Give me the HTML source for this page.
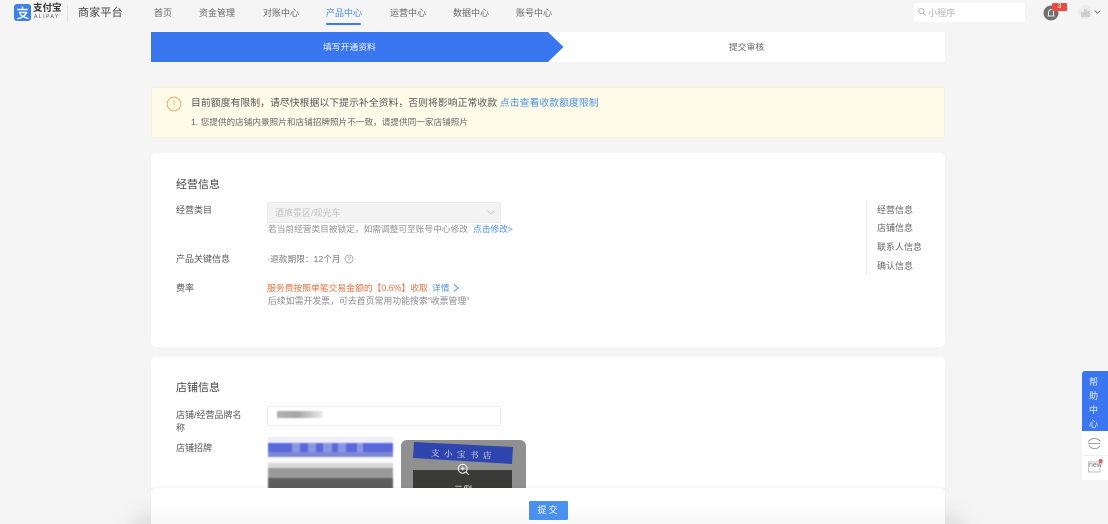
<!DOCTYPE html>
<html lang="zh-CN"><head><meta charset="utf-8"><title>商家平台</title>
<style>
html,body{margin:0;padding:0;width:1108px;height:524px;overflow:hidden;background:#f5f5f5}
body{position:relative;font-family:"Liberation Sans","Noto Sans CJK SC",sans-serif;font-size:9px;color:#555}
#w{position:absolute;left:0;top:0;width:1108px;height:524px;background:#f5f5f5;filter:blur(.35px);overflow:hidden}
.a{position:absolute;white-space:nowrap;line-height:12px}
.nav{top:7px;font-size:9px;color:#666}
.card{position:absolute;left:151px;width:794px;background:#fff;border-radius:5px}
.lab{left:176px;font-size:9px;color:#555}
.link{color:#4a8fe0}
.side{left:877px;font-size:9px;color:#666}
</style></head><body><div id="w">
<svg class="a" style="left:14px;top:4px" width="17" height="17" viewBox="0 0 17 17"><rect width="17" height="17" rx="3" fill="#3b82e8"/><path d="M3 5.500H14M8.500 2.500V5.500M5 8.500H12.500C11.500 11.500 8 14 3.200 14.800M5.500 9.500C7.500 12 10.500 13.700 14.500 14.500" stroke="#fff" stroke-width="1.400" fill="none"/></svg>
<div class="a" style="left:33px;top:3px;font-size:9.500px;font-weight:bold;color:#333">支付宝</div>
<div class="a" style="left:34px;top:14px;font-size:5px;line-height:6px;color:#555;letter-spacing:1.500px">ALIPAY</div>
<div class="a" style="left:67px;top:5px;width:1px;height:17px;background:#e2e2e2"></div>
<div class="a" style="left:78px;top:7px;font-size:11px;color:#444;letter-spacing:.2px">商家平台</div>
<div class="a nav" style="left:154px">首页</div>
<div class="a nav" style="left:199px">资金管理</div>
<div class="a nav" style="left:263px">对账中心</div>
<div class="a nav" style="left:326px;color:#4a8af0">产品中心</div>
<div class="a" style="left:326px;top:23px;width:35px;height:2px;background:#3c78ee;border-radius:1px"></div>
<div class="a nav" style="left:390px">运营中心</div>
<div class="a nav" style="left:453px">数据中心</div>
<div class="a nav" style="left:516px">账号中心</div>
<div class="a" style="left:914px;top:3px;width:111px;height:19px;background:#fff;border-radius:1px"></div>
<svg class="a" style="left:918px;top:8px" width="8" height="8" viewBox="0 0 8 8"><circle cx="3.300" cy="3.300" r="2.600" fill="none" stroke="#aaa" stroke-width=".8"/><path d="M5.200 5.200L7.500 7.500" stroke="#aaa" stroke-width=".8"/></svg>
<div class="a" style="left:928px;top:7px;color:#b5b5b5">小程序</div>
<svg class="a" style="left:1043px;top:5px" width="16" height="16" viewBox="0 0 16 16"><circle cx="8" cy="8" r="7.500" fill="#707070"/><path d="M4.500 11H11.500M5.500 11V7.500C5.500 5.800 6.500 4.600 8 4.600S10.500 5.800 10.500 7.500V11" stroke="#eee" stroke-width="1" fill="none"/></svg>
<div class="a" style="left:1052px;top:3px;width:15px;height:8px;background:#ea4a40;border-radius:1px;color:#fff;font-size:7px;line-height:8px;text-align:center">3</div>
<div class="a" style="left:1078px;top:5px;width:14px;height:14px;border-radius:50%;background:#ececec"></div>
<svg class="a" style="left:1081px;top:8px" width="9" height="9" viewBox="0 0 9 9"><path d="M0 9V4H3V9ZM3 9V1H6V9ZM6 9V3H9V9Z" fill="#cfcfcf"/></svg>
<svg class="a" style="left:1094px;top:10px" width="7" height="4" viewBox="0 0 7 4"><path d="M.5.500L3.500 3.200L6.500.5" fill="none" stroke="#666" stroke-width=".8"/></svg>

<div class="a" style="left:151px;top:32px;width:794px;height:30px;background:#fff"></div>
<svg class="a" style="left:151px;top:32px" width="413" height="30" viewBox="0 0 413 30"><path d="M0 0H397L412.500 15L397 30H0Z" fill="#3a76f0"/></svg>
<div class="a" style="left:323px;top:41px;font-size:8.800px;color:#f2f6ff">填写开通资料</div>
<div class="a" style="left:729px;top:41px;font-size:8.800px;color:#666">提交审核</div>

<div class="a" style="left:151px;top:87px;width:792px;height:49px;background:#fffbe9;border:1px solid #f7f1db;border-radius:2px"></div>
<svg class="a" style="left:166px;top:96px" width="16" height="16" viewBox="0 0 16 16"><circle cx="8" cy="8" r="6.800" fill="none" stroke="#eeb366" stroke-width="1.100"/><path d="M8 4.300V9M8 10.500V11.800" stroke="#eeb366" stroke-width="1.100"/></svg>
<div class="a" style="left:191px;top:98px;font-size:9.900px;color:#555">目前额度有限制，请尽快根据以下提示补全资料，否则将影响正常收款 <span class="link">点击查看收款额度限制</span></div>
<div class="a" style="left:191px;top:116px;font-size:8.650px;color:#666">1. 您提供的店铺内景照片和店铺招牌照片不一致，请提供同一家店铺照片</div>

<div class="card" style="top:153px;height:194px"></div>
<div class="a" style="left:176px;top:179px;font-size:11px;color:#444">经营信息</div>
<div class="a lab" style="top:204px">经营类目</div>
<div class="a" style="left:267px;top:202px;width:232px;height:19px;background:#f3f3f3;border:1px solid #ebebeb;border-radius:2px"></div>
<div class="a" style="left:275px;top:207px;color:#c0c0c0">酒旅景区/观光车</div>
<svg class="a" style="left:487px;top:210px" width="8" height="5" viewBox="0 0 8 5"><path d="M.5.500L4 4L7.500.5" fill="none" stroke="#c5c5c5" stroke-width=".8"/></svg>
<div class="a" style="left:268px;top:223px;font-size:8.700px;color:#909090">若当前经营类目被锁定，如需调整可至账号中心修改</div>
<div class="a link" style="left:473px;top:223px;font-size:8.700px">点击修改&gt;</div>
<div class="a lab" style="top:253px">产品关键信息</div>
<div class="a" style="left:267px;top:253px;font-size:8.700px;color:#777"><span style="color:#bbb">◦</span>退款期限：12个月</div>
<svg class="a" style="left:344px;top:254px" width="10" height="10" viewBox="0 0 10 10"><circle cx="5" cy="5" r="4" fill="none" stroke="#999" stroke-width=".7"/><path d="M3.800 4C3.800 2.500 6.200 2.500 6.200 4C6.200 5 5 5 5 6M5 6.800V7.500" fill="none" stroke="#999" stroke-width=".7"/></svg>
<div class="a lab" style="top:282px">费率</div>
<div class="a" style="left:267px;top:282px;font-size:8.800px;color:#e8743f">服务费按照单笔交易金额的【0.6%】收取</div>
<div class="a link" style="left:432px;top:282px;font-size:8.700px">详情</div>
<svg class="a" style="left:453px;top:284px" width="6" height="8" viewBox="0 0 6 8"><path d="M1 .5L5 4L1 7.500" fill="none" stroke="#4a8fe0" stroke-width=".9"/></svg>
<div class="a" style="left:268px;top:295px;font-size:8.900px;color:#8a8a8a">后续如需开发票，可去首页常用功能搜索“收票管理”</div>
<div class="a" style="left:866px;top:200px;width:1px;height:75px;background:#eaeaea"></div>
<div class="a side" style="top:204px">经营信息</div>
<div class="a side" style="top:222px">店铺信息</div>
<div class="a side" style="top:241px">联系人信息</div>
<div class="a side" style="top:260px">确认信息</div>

<div class="card" style="top:357px;height:167px"></div>
<div class="a" style="left:176px;top:382px;font-size:11px;color:#444">店铺信息</div>
<div class="a lab" style="top:409px;line-height:13px">店铺/经营品牌名<br>称</div>
<div class="a" style="left:267px;top:406px;width:232px;height:18px;background:#fff;border:1px solid #ececec;border-radius:2px"></div>
<div class="a" style="left:277px;top:411px;width:46px;height:7px;background:linear-gradient(90deg,#b0b0b0,#a5a5a5 45%,#c5c5c5 70%,#eee);filter:blur(.8px)"></div>
<div class="a lab" style="top:442px">店铺招牌</div>
<div class="a" style="left:268px;top:437px;width:125px;height:52px;overflow:hidden;filter:blur(.8px)">
<div class="a" style="left:0;top:0;width:125px;height:6px;background:#eeeef8"></div>
<div class="a" style="left:0;top:6px;width:125px;height:9px;background:#5a68dc"></div>
<div class="a" style="left:0;top:15px;width:125px;height:5px;background:#7e88d2"></div>
<div class="a" style="left:24px;top:6px;width:8px;height:9px;background:#8d96e3"></div>
<div class="a" style="left:40px;top:6px;width:8px;height:9px;background:#8d96e3"></div>
<div class="a" style="left:55px;top:6px;width:9px;height:9px;background:#8d96e3"></div>
<div class="a" style="left:70px;top:6px;width:8px;height:9px;background:#8d96e3"></div>
<div class="a" style="left:89px;top:6px;width:6px;height:9px;background:#8d96e3"></div>
<div class="a" style="left:0;top:20px;width:125px;height:6px;background:#fafafa"></div>
<div class="a" style="left:0;top:26px;width:125px;height:5px;background:#d8d8d8"></div>
<div class="a" style="left:0;top:31px;width:125px;height:10px;background:#9a9a9a"></div>
<div class="a" style="left:0;top:41px;width:125px;height:11px;background:#5e5e5e"></div>
</div>
<div class="a" style="left:401px;top:440px;width:125px;height:50px;background:#909090;border-radius:6px 6px 0 0;overflow:hidden">
<svg class="a" style="left:0;top:0" width="125" height="50" viewBox="0 0 125 50"><path d="M13 2L112 7L111 24L12 18Z" fill="#2f45ae"/><path d="M12 30H111V50H12Z" fill="#3a3a38"/></svg>
<div class="a" style="left:30px;top:7px;font-family:'Noto Serif CJK SC',serif;font-size:8.500px;letter-spacing:4.500px;color:#e8e8f0;transform:rotate(2.500deg);transform-origin:left center">支小宝书店</div>
<div class="a" style="left:47px;top:44px;width:30px;text-align:center;color:#fff;font-size:9px">示例</div>
</div>
<svg class="a" style="left:457px;top:463px" width="13" height="13" viewBox="0 0 13 13"><circle cx="5.700" cy="5.700" r="4.500" fill="none" stroke="#fff" stroke-width="1"/><path d="M9 9L12 12M3.800 5.700H7.600M5.700 3.800V7.600" stroke="#fff" stroke-width="1"/></svg>

<div class="a" style="left:0;top:488px;width:1108px;height:36px;background:#f5f5f5"></div>
<div class="a" style="left:135px;top:518px;width:826px;height:30px;background:#d4d4d4;filter:blur(10px)"></div>
<div class="a" style="left:151px;top:488px;width:794px;height:36px;background:linear-gradient(#fff 40%,#f8f8f8);border-radius:4px 4px 0 0;box-shadow:0 -1px 3px rgba(0,0,0,.05)"></div>
<div class="a" style="left:529px;top:501px;width:39px;height:19px;background:#4a90ee;border-radius:1px;color:#fff;font-size:9px;line-height:19px;text-align:center;letter-spacing:2px">提交</div>

<div class="a" style="left:1082px;top:371px;width:26px;height:60px;background:#3a76f0;border-radius:3px 0 0 0"></div>
<div class="a" style="left:1089px;top:375px;width:10px;font-size:9px;line-height:14px;color:#e8f0ff;white-space:normal">帮助中心</div>
<div class="a" style="left:1082px;top:431px;width:26px;height:49px;background:#fff"></div>
<div class="a" style="left:1082px;top:455px;width:26px;height:1px;background:#f1f1f1"></div>
<svg class="a" style="left:1087px;top:437px" width="15" height="13" viewBox="0 0 15 13"><path d="M1.500 5C3 .5 11 .5 13 4.500M1 6.500H13.500M2 8C3.500 12.500 10 12.800 13 9" fill="none" stroke="#888" stroke-width=".8"/></svg>
<svg class="a" style="left:1087px;top:458px" width="20" height="16" viewBox="0 0 20 16"><path d="M1.500 4H13V14H1.500Z" fill="#fff" stroke="#aaa" stroke-width=".7"/><circle cx="13.700" cy="3" r="2" fill="#e9534a"/></svg>
<div class="a" style="left:1089px;top:462px;font-size:7px;line-height:8px;color:#777">new</div>
</div></body></html>
